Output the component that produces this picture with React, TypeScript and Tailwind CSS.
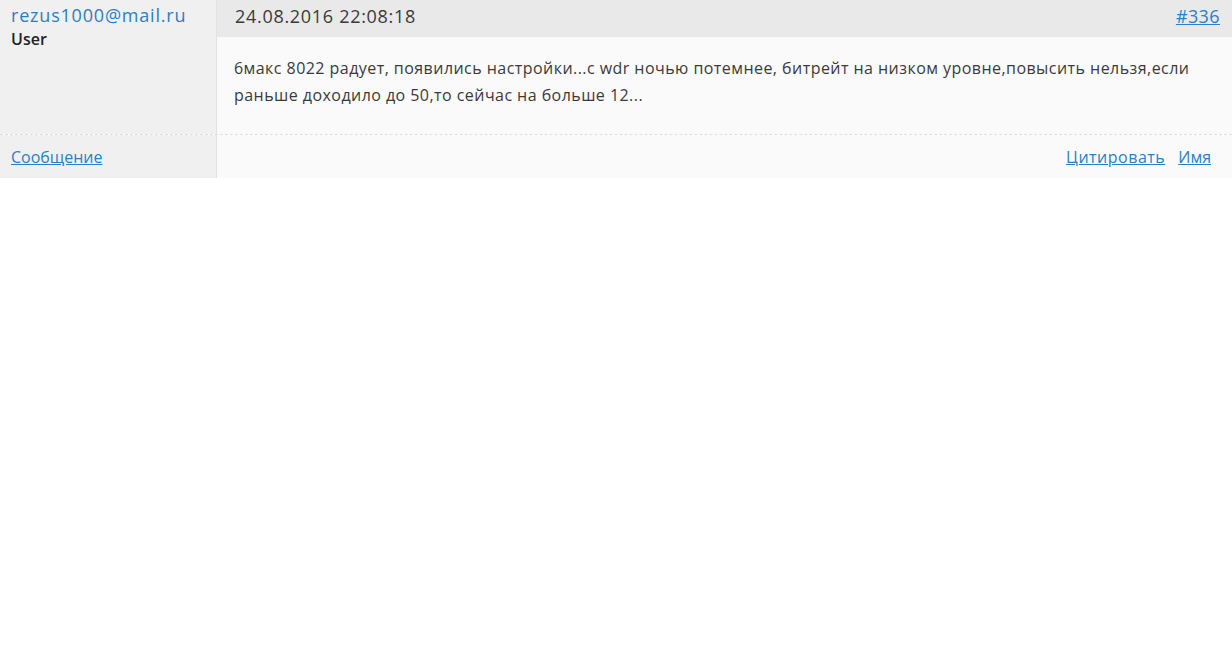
import React from 'react';

// Forum post card: author column on the left, header/body/actions on the right

const font = { fontFamily: '"Open Sans", "Liberation Sans", sans-serif' };

export default function App() {
  return (
    <div className="w-[1232px] h-[648px] bg-white text-[#333]" style={font}>
      <div className="flex">
        {/* author */}
        <div className="w-[217px] shrink-0 bg-[#f0f0f0] border-r border-[#e2e2e2] pl-[11px] pt-[2px]">
          <a href="#" className="block text-[18px] leading-[26px] text-[#2b7fc4] tracking-[0.8px]">
            rezus1000@mail.ru
          </a>
          <div className="text-[16px] leading-[23px] font-semibold text-[#222]">User</div>
        </div>

        {/* post */}
        <div className="flex-1 bg-[#fafafa]">
          <div className="h-[37px] bg-[#e9e9e9] flex items-center justify-between pl-[18px] pr-[12px] pb-[4px]">
            <span className="text-[18px] text-[#3a3a3a] tracking-[0.7px]">24.08.2016 22:08:18</span>
            <a href="#" className="text-[18px] text-[#2b7fc4] underline tracking-[0.4px]">#336</a>
          </div>
          <div className="h-[97px] pl-[17px] pr-[20px] pt-[18px] text-[16px] leading-[27px] text-[#3a3a3a] tracking-[0.45px]">
            6макс 8022 радует, появились настройки...c wdr ночью потемнее, битрейт на низком уровне,повысить нельзя,если раньше доходило до 50,то сейчас на больше 12...
          </div>
        </div>
      </div>

      <div className="flex border-t border-dashed border-[#dedede] h-[44px]">
        <div className="w-[217px] shrink-0 bg-[#f0f0f0] border-r border-[#e2e2e2] pl-[11px] flex items-center">
          <a href="#" className="text-[16px] text-[#2b7fc4] underline">Сообщение</a>
        </div>
        <div className="flex-1 bg-[#fafafa] flex items-center justify-end gap-[13px] pr-[21px]">
          <a href="#" className="text-[16px] text-[#2b7fc4] underline tracking-[0.5px]">Цитировать</a>
          <a href="#" className="text-[16px] text-[#2b7fc4] underline">Имя</a>
        </div>
      </div>
    </div>
  );
}
